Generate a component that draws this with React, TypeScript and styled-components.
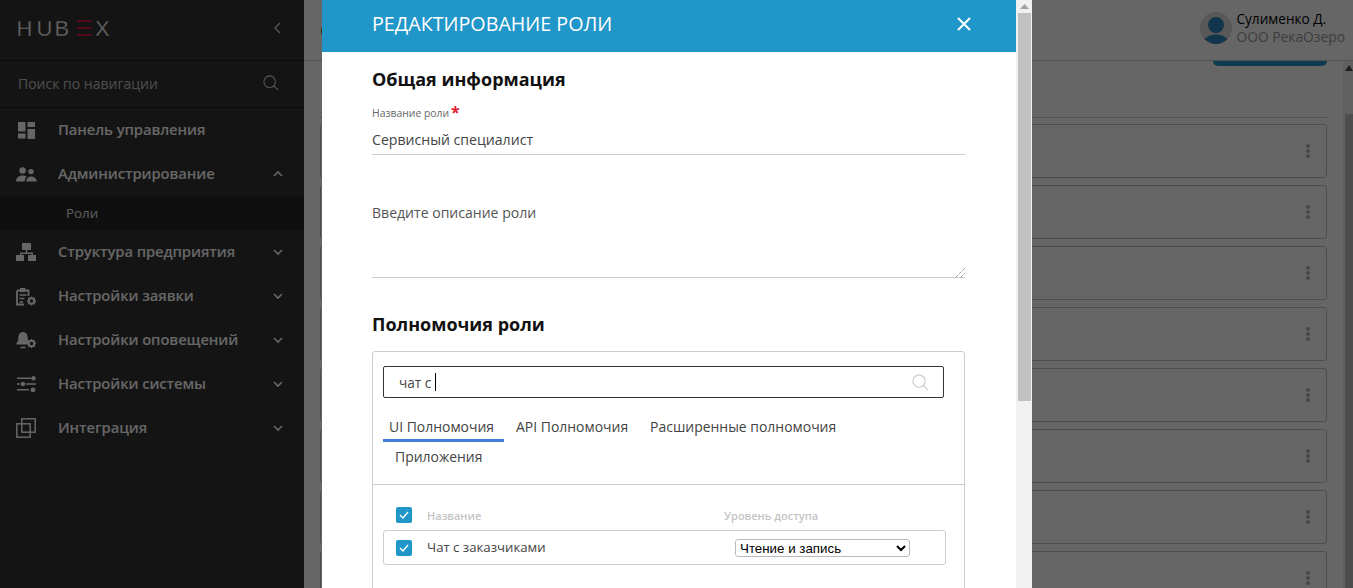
import React from 'react';
import styled, { createGlobalStyle } from 'styled-components';

const Global = createGlobalStyle`
  html, body { margin: 0; padding: 0; height: 100%; overflow: hidden; }
  body { font-family: "Open Sans", "Liberation Sans", sans-serif; background: #fff; }
  * { box-sizing: border-box; }
`;

const Page = styled.div`
  display: flex;
  width: 1353px;
  height: 588px;
  overflow: hidden;
`;

const Sidebar = styled.aside`
  width: 304px;
  flex: none;
  background: #333;
  display: flex;
  flex-direction: column;
`;

const SideHead = styled.div`
  height: 61px;
  flex: none;
  border-bottom: 1px solid #1c1c1c;
  display: flex;
  align-items: center;
  justify-content: space-between;
  padding: 0 20px 4px 18px;
`;

const SideSearch = styled.div`
  height: 47px;
  flex: none;
  border-bottom: 1px solid #1c1c1c;
  display: flex;
  align-items: center;
  justify-content: space-between;
  padding: 0 25px 2px 18px;
  color: #c4c4c4;
  font-size: 14px;
  svg { color: #ddd; }
`;

const Menu = styled.nav`
  display: flex;
  flex-direction: column;
`;

const MenuItem = styled.div`
  height: 44px;
  display: flex;
  align-items: center;
  padding: 0 20px 0 16px;
  color: #fff;
  font-size: 14.8px;
  font-weight: 600;
  letter-spacing: -0.1px;
`;

const MenuIcon = styled.span`
  width: 42px;
  height: 22px;
  flex: none;
  display: flex;
  align-items: center;
  svg { display: block; }
`;

const MenuLabel = styled.span`
  flex: 1;
  white-space: nowrap;
  padding-bottom: 2px;
`;

const SubItem = styled.div`
  height: 34px;
  background: #262626;
  display: flex;
  align-items: center;
  padding-left: 66px;
  color: #e6e6e6;
  font-size: 13.4px;
`;

const Main = styled.main`
  flex: 1;
  min-width: 0;
  background: #fff;
  display: flex;
  flex-direction: column;
`;

const TopBar = styled.header`
  height: 61px;
  flex: none;
  border-bottom: 1px solid #ccc;
  display: flex;
  align-items: center;
  justify-content: space-between;
  padding: 0 8px 0 16px;
`;

const PageTitle = styled.h1`
  margin: 0;
  font-size: 20px;
  font-weight: 400;
  color: #333;
`;

const User = styled.div`
  display: flex;
  align-items: center;
  gap: 4px;
  margin-top: -4px;
`;

const Avatar = styled.svg`
  width: 32px;
  height: 32px;
  display: block;
`;

const UserText = styled.div`
  display: flex;
  flex-direction: column;
  line-height: 18px;
`;

const UserName = styled.span`
  color: #000;
  font-size: 13.6px;
`;

const UserOrg = styled.span`
  color: #999;
  font-size: 13.8px;
`;

const Body = styled.div`
  flex: 1;
  min-height: 0;
  display: flex;
  overflow: hidden;
`;

const Content = styled.div`
  flex: 1;
  min-width: 0;
  padding: 0 16px;
`;

const Toolbar = styled.div`
  height: 57px;
  border-bottom: 1px solid #ccc;
  margin-bottom: 6px;
  display: flex;
  justify-content: flex-end;
`;

const AddButton = styled.div`
  width: 114px;
  height: 5px;
  background: #2196c9;
  border-radius: 0 0 5px 5px;
`;

const Rows = styled.div`
  display: flex;
  flex-direction: column;
  gap: 7px;
`;

const RowCard = styled.div`
  height: 54px;
  flex: none;
  border: 1px solid #c4c4c4;
  border-radius: 3px;
  display: flex;
  align-items: center;
  justify-content: flex-end;
  padding-right: 16px;
`;

const Dots = styled.div`
  display: flex;
  flex-direction: column;
  gap: 1px;
  span {
    width: 4px;
    height: 4px;
    border-radius: 50%;
    background: #b4b4b4;
  }
`;

const PageScroll = styled.div`
  width: 10px;
  flex: none;
  background: #f1f1f1;
  display: flex;
  flex-direction: column;
  align-items: flex-end;
`;

const PageArrow = styled.div`
  height: 53px;
  width: 8px;
  flex: none;
  padding-top: 4px;
  svg { display: block; }
`;

const PageThumb = styled.div`
  width: 8px;
  flex: 1;
  background: #c1c1c1;
`;

const Overlay = styled.div`
  position: fixed;
  inset: 0;
  background: rgba(0, 0, 0, 0.6);
  display: flex;
  padding-left: 322px;
`;

const Dialog = styled.section`
  width: 694px;
  flex: none;
  height: 588px;
  overflow: hidden;
  background: #fff;
  display: flex;
  flex-direction: column;
`;

const DialogHead = styled.div`
  height: 52px;
  flex: none;
  background: #2196c9;
  color: #fff;
  display: flex;
  align-items: center;
  justify-content: space-between;
  padding: 0 45px 5px 50px;
  font-size: 19.7px;
  svg { display: block; }
`;

const DialogBody = styled.div`
  padding: 0 51px 0 50px;
  display: flex;
  flex-direction: column;
`;

const SectionTitle = styled.h2`
  margin: 0;
  font-size: 18px;
  font-weight: 700;
  color: #111;
  line-height: 24px;
`;

const GeneralTitle = styled(SectionTitle)`
  margin-top: 15px;
`;

const RolesTitle = styled(SectionTitle)`
  margin-top: 34px;
`;

const FieldLabel = styled.div`
  margin-top: 15px;
  font-size: 10.4px;
  line-height: 14px;
  color: #666;
  display: flex;
`;

const Required = styled.span`
  color: #e0202c;
  font-size: 16px;
  font-weight: 700;
  line-height: 12px;
  margin-left: 2px;
`;

const NameField = styled.div`
  height: 35px;
  padding-top: 10px;
  border-bottom: 1px solid #ccc;
  font-size: 14.1px;
  line-height: 20px;
  color: #444;
`;

const DescField = styled.div`
  position: relative;
  margin-top: 49px;
  height: 74px;
  border-bottom: 1px solid #ccc;
  font-size: 14.05px;
  line-height: 18px;
  color: #555;
`;

const Grip = styled.svg`
  position: absolute;
  right: 0;
  bottom: 0;
  display: block;
`;

const PermBox = styled.div`
  margin-top: 15px;
  height: 260px;
  border: 1px solid #ccc;
  border-radius: 3px 3px 0 0;
  display: flex;
  flex-direction: column;
`;

const SearchBox = styled.div`
  margin: 14px 20px 0 10px;
  height: 32px;
  border: 1px solid #333;
  border-radius: 2px;
  display: flex;
  align-items: center;
  justify-content: space-between;
  padding: 0 14px 0 15px;
  font-size: 13.6px;
  color: #444;
`;

const SearchValue = styled.span`
  display: flex;
  align-items: center;
  gap: 4px;
`;

const Caret = styled.span`
  width: 1px;
  height: 18px;
  background: #000;
`;

const Tabs = styled.div`
  display: flex;
  flex-wrap: wrap;
  padding: 13px 20px 0 10px;
  border-bottom: 1px solid #ccc;
  flex: none;
  height: 87px;
  align-content: flex-start;
`;

const Tab = styled.div<{ $active?: boolean }>`
  height: ${p => (p.$active ? '31px' : '30px')};
  margin-bottom: ${p => (p.$active ? '-1px' : '0')};
  padding: ${p => (p.$active ? '6px 10px 0 6px' : '6px 10px 0 12px')};
  font-size: 13.95px;
  line-height: 20px;
  color: #444;
  border-bottom: ${p => (p.$active ? '3px solid #3f7fd6' : '0')};
  white-space: nowrap;
`;

const TableHead = styled.div`
  margin-top: 22px;
  height: 16px;
  display: grid;
  grid-template-columns: 31px 297px 1fr;
  padding-left: 23px;
  align-items: center;
  color: #c4c4c4;
  font-size: 11px;
  font-weight: 600;
`;

const TableRow = styled.div`
  margin: 7px 18px 0 10px;
  height: 35px;
  border: 1px solid #ccc;
  border-radius: 3px;
  display: grid;
  grid-template-columns: 31px 308px 175px;
  padding-left: 12px;
  align-items: center;
  font-size: 13.2px;
  color: #444;
`;

const RowName = styled.span`
  padding-bottom: 2px;
`;

const Check = styled.span`
  width: 16px;
  height: 16px;
  border-radius: 2px;
  background: #2196c9;
  display: flex;
  align-items: center;
  justify-content: center;
  svg { display: block; }
`;

const AccessSelect = styled.select`
  width: 175px;
  height: 18px;
  padding: 0;
  font-family: "Liberation Sans", Arial, sans-serif;
  font-size: 13.33px;
  background: #fff;
  color: #000;
  border: 1px solid #bbb;
  border-radius: 3px;
`;

const DialogScroll = styled.div`
  width: 16px;
  flex: none;
  height: 588px;
  background: #f1f1f1;
  display: flex;
  flex-direction: column;
  align-items: center;
`;

const ScrollArrow = styled.div`
  height: 13px;
  flex: none;
  display: flex;
  align-items: center;
  justify-content: center;
  width: 100%;
  svg { display: block; }
`;

const ScrollThumb = styled.div`
  width: 13px;
  height: 388px;
  background: #c1c1c1;
`;

const LogoMark = styled.svg`
  display: block;
  overflow: visible;
`;

const logoFont = { fontFamily: 'Liberation Sans, sans-serif', fontSize: 22, fill: '#fff', stroke: '#333', strokeWidth: 0.35 };

const Logo = () => (
  <LogoMark width="92" height="16" viewBox="0 0 92 16">
    <text x="-1.500 18.500 36.500" y="16" {...logoFont}>
      HUB
    </text>
    <text x="77" y="16" {...logoFont}>
      X
    </text>
    <rect x="59" y="0" width="15" height="2" fill="#d01c40" />
    <rect x="59" y="7" width="15" height="2" fill="#d01c40" />
    <rect x="59" y="14" width="15" height="2" fill="#d01c40" />
  </LogoMark>
);

const Chevron = ({ up }: { up?: boolean }) => (
  <svg width="12" height="12" viewBox="0 0 12 12" fill="none" stroke="#fff" strokeWidth="1.6">
    <path d={up ? 'M2 8l4-4 4 4' : 'M2 4l4 4 4-4'} />
  </svg>
);

const Gear = ({ x, y }: { x: number; y: number }) => (
  <g transform={`translate(${x} ${y})`}>
    <circle r="2.800" fill="none" stroke="#fff" strokeWidth="2" />
    <path d="M0-4.600v2M0 2.600v2M-4.600 0h2M2.600 0h2M-3.200-3.200l1.400 1.400M1.800 1.800l1.400 1.400M3.200-3.200L1.800-1.800M-1.800 1.800l-1.400 1.400" stroke="#fff" strokeWidth="1.400" />
  </g>
);

const IconDash = () => (
  <svg width="17" height="17" viewBox="0 0 17 17" fill="#fff" style={{ marginLeft: 2 }}>
    <rect x="0" y="0" width="7.500" height="9.500" />
    <rect x="0" y="11.500" width="7.500" height="5" />
    <rect x="9.500" y="0" width="7.500" height="5" />
    <rect x="9.500" y="7" width="7.500" height="10" />
  </svg>
);

const IconPeople = () => (
  <svg width="21" height="15" viewBox="0 0 21 15" fill="#fff">
    <circle cx="6.600" cy="3.400" r="3.200" />
    <circle cx="15" cy="4.600" r="2.700" />
    <path d="M0 14.500c0-3.800 2.800-6 6.600-6 1.600 0 3 .4 4 1.200-1.200 1-1.900 2.700-1.900 4.800zM10.300 14.500c0-3 2-5 4.700-5s5.600 1.800 6 5z" />
  </svg>
);

const IconTree = () => (
  <svg width="20" height="18" viewBox="0 0 20 18" fill="#fff">
    <rect x="6" y="0" width="9" height="7" />
    <rect x="0" y="12" width="8" height="6" />
    <rect x="12" y="12" width="8" height="6" />
    <path d="M9.800 7h1.400v2.500H17V12h-1.400V11H5.400v1H4V9.500h5.800z" />
  </svg>
);

const IconTicket = () => (
  <svg width="21" height="19" viewBox="0 0 21 19" fill="none">
    <path d="M1 3.500h11.500V9M1 3.500v14h7" stroke="#fff" strokeWidth="1.800" />
    <path d="M4 1h5.500v4H4z" fill="#fff" />
    <path d="M3.500 8h7M3.500 11.500h5M3.500 15h3.500" stroke="#fff" strokeWidth="1.600" />
    <Gear x={15.5} y={14} />
  </svg>
);

const IconBell = () => (
  <svg width="21" height="19" viewBox="0 0 21 19" fill="none">
    <path d="M7 1c3 0 4.600 2.400 4.600 5.400 0 3 1 4.600 1.900 5.600v1.400H.5V12c1-1 1.900-2.600 1.900-5.600C2.400 3.400 4 1 7 1z" fill="#fff" />
    <path d="M4.500 16.500h5" stroke="#fff" strokeWidth="1.600" />
    <Gear x={15.5} y={12.5} />
  </svg>
);

const IconSliders = () => (
  <svg width="20" height="16" viewBox="0 0 20 16" fill="#fff" style={{ marginLeft: 1 }}>
    <path d="M0 1.500h14v1.400H0zM0 7.300h3v1.400H0zM9 7.300h10v1.400H9zM0 13.100h12v1.400H0z" />
    <circle cx="16.500" cy="2.200" r="2.200" />
    <circle cx="6" cy="8" r="2.200" />
    <circle cx="16" cy="13.800" r="2.400" />
  </svg>
);

const IconLayers = () => (
  <svg width="20" height="20" viewBox="0 0 20 20" fill="none" stroke="#fff" strokeWidth="1.500">
    <rect x="0.800" y="5.800" width="13.400" height="13.400" />
    <rect x="5.800" y="0.800" width="13.400" height="13.400" />
  </svg>
);

const SearchIcon = ({ color, size }: { color: string; size: number }) => (
  <svg width={size} height={size} viewBox="0 0 18 18" fill="none" stroke={color} strokeWidth="1.200">
    <circle cx="7.500" cy="7.500" r="6.500" />
    <path d="M12.300 12.300L17 17" />
  </svg>
);

const CheckBox = () => (
  <Check>
    <svg width="10" height="8" viewBox="0 0 10 8" fill="none" stroke="#fff" strokeWidth="1.400">
      <path d="M1 4l3 3 5-6" />
    </svg>
  </Check>
);

const menuRest = [
  { label: 'Структура предприятия', icon: <IconTree /> },
  { label: 'Настройки заявки', icon: <IconTicket /> },
  { label: 'Настройки оповещений', icon: <IconBell /> },
  { label: 'Настройки системы', icon: <IconSliders /> },
  { label: 'Интеграция', icon: <IconLayers /> },
];

export default function App() {
  return (
    <>
      <Global />
      <Page>
        <Sidebar>
          <SideHead>
            <Logo />
            <svg width="12" height="14" viewBox="0 0 12 14" fill="none" stroke="#ccc" strokeWidth="1.500">
              <path d="M8 2L3 7l5 5" />
            </svg>
          </SideHead>
          <SideSearch>
            Поиск по навигации
            <SearchIcon color="#ddd" size={16} />
          </SideSearch>
          <Menu>
            <MenuItem>
              <MenuIcon>
                <IconDash />
              </MenuIcon>
              <MenuLabel>Панель управления</MenuLabel>
            </MenuItem>
            <MenuItem>
              <MenuIcon>
                <IconPeople />
              </MenuIcon>
              <MenuLabel>Администрирование</MenuLabel>
              <Chevron up />
            </MenuItem>
            <SubItem>Роли</SubItem>
            {menuRest.map(m => (
              <MenuItem key={m.label}>
                <MenuIcon>{m.icon}</MenuIcon>
                <MenuLabel>{m.label}</MenuLabel>
                <Chevron />
              </MenuItem>
            ))}
          </Menu>
        </Sidebar>
        <Main>
          <TopBar>
            <PageTitle>С</PageTitle>
            <User>
              <Avatar viewBox="0 0 32 32">
                <defs>
                  <clipPath id="avatarClip">
                    <circle cx="16" cy="16" r="16" />
                  </clipPath>
                </defs>
                <circle cx="16" cy="16" r="16" fill="#dcdcdc" />
                <g clipPath="url(#avatarClip)">
                  <circle cx="16" cy="13" r="8" fill="#2b86c0" />
                  <path d="M3 32c0-6 6-9.500 13-9.500S29 26 29 32z" fill="#2b86c0" />
                </g>
              </Avatar>
              <UserText>
                <UserName>Сулименко Д.</UserName>
                <UserOrg>ООО РекаОзеро</UserOrg>
              </UserText>
            </User>
          </TopBar>
          <Body>
            <Content>
              <Toolbar>
                <AddButton />
              </Toolbar>
              <Rows>
                {[0, 1, 2, 3, 4, 5, 6, 7].map(i => (
                  <RowCard key={i}>
                    <Dots>
                      <span />
                      <span />
                      <span />
                    </Dots>
                  </RowCard>
                ))}
              </Rows>
            </Content>
            <PageScroll>
              <PageArrow>
                <svg width="8" height="6" viewBox="0 0 8 6" fill="#505050">
                  <path d="M4 0l4 6H0z" />
                </svg>
              </PageArrow>
              <PageThumb />
            </PageScroll>
          </Body>
        </Main>
      </Page>
      <Overlay>
        <Dialog>
          <DialogHead>
            РЕДАКТИРОВАНИЕ РОЛИ
            <svg width="14" height="14" viewBox="0 0 14 14" fill="none" stroke="#fff" strokeWidth="2">
              <path d="M1 1l12 12M13 1L1 13" />
            </svg>
          </DialogHead>
          <DialogBody>
            <GeneralTitle>Общая информация</GeneralTitle>
            <FieldLabel>
              Название роли<Required>*</Required>
            </FieldLabel>
            <NameField>Сервисный специалист</NameField>
            <DescField>
              Введите описание роли
              <Grip width="9" height="9" viewBox="0 0 9 9" stroke="#666" strokeWidth="1" strokeDasharray="1 1">
                <path d="M0 9l9-9M5 9l4-4" />
              </Grip>
            </DescField>
            <RolesTitle>Полномочия роли</RolesTitle>
            <PermBox>
              <SearchBox>
                <SearchValue>
                  чат с<Caret />
                </SearchValue>
                <SearchIcon color="#c8c8c8" size={17} />
              </SearchBox>
              <Tabs>
                <Tab $active>UI Полномочия</Tab>
                <Tab>API Полномочия</Tab>
                <Tab>Расширенные полномочия</Tab>
                <Tab>Приложения</Tab>
              </Tabs>
              <TableHead>
                <CheckBox />
                <span>Название</span>
                <span>Уровень доступа</span>
              </TableHead>
              <TableRow>
                <CheckBox />
                <RowName>Чат с заказчиками</RowName>
                <AccessSelect defaultValue="rw">
                  <option value="rw">Чтение и запись</option>
                </AccessSelect>
              </TableRow>
            </PermBox>
          </DialogBody>
        </Dialog>
        <DialogScroll>
          <ScrollArrow>
            <svg width="9" height="5" viewBox="0 0 9 5" fill="#a3a3a3">
              <path d="M4.500 0L9 5H0z" />
            </svg>
          </ScrollArrow>
          <ScrollThumb />
        </DialogScroll>
      </Overlay>
    </>
  );
}
